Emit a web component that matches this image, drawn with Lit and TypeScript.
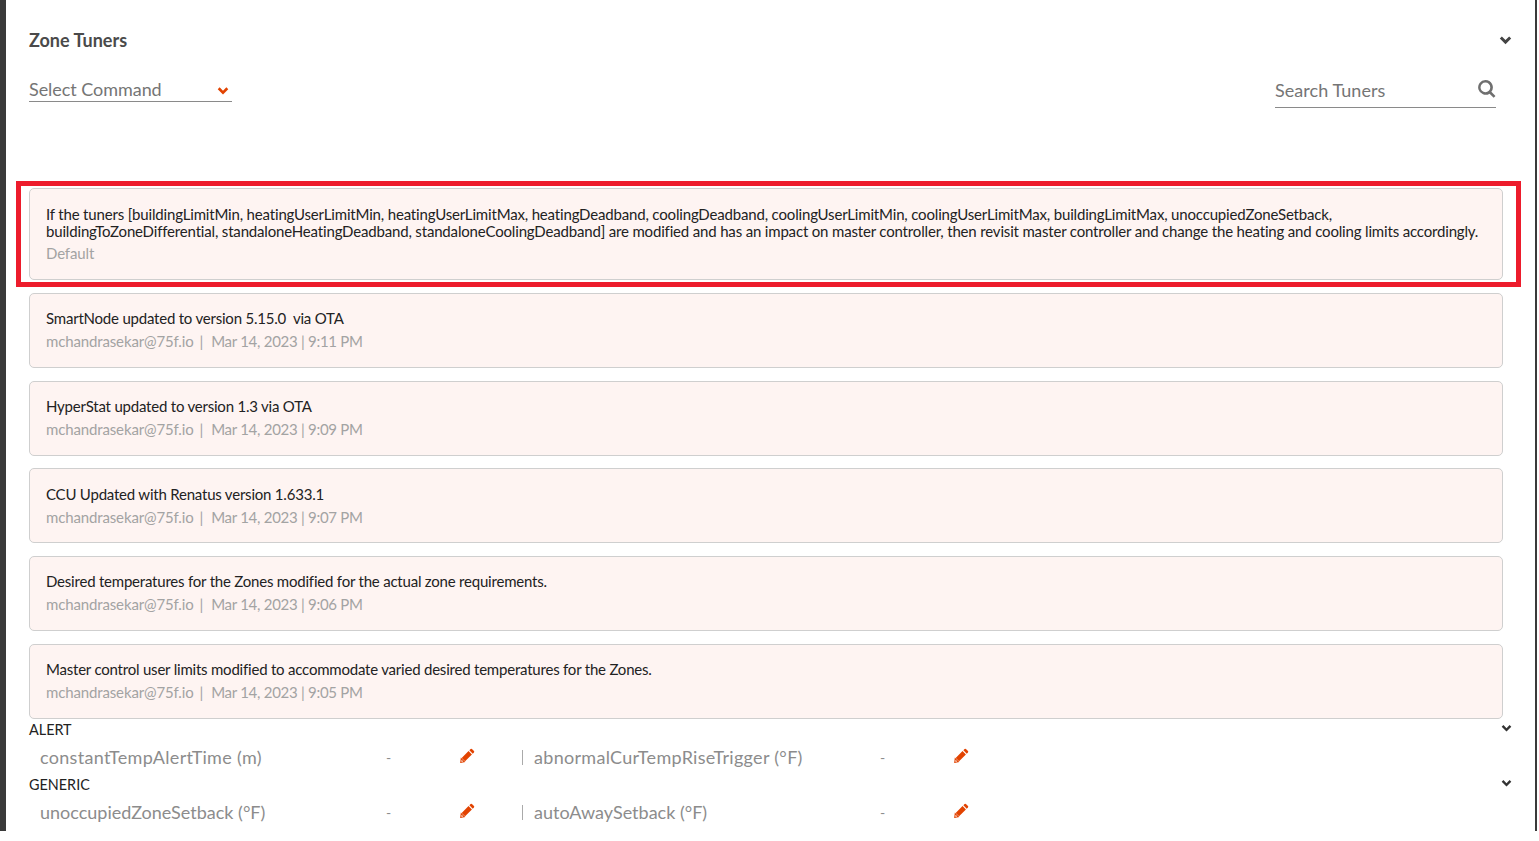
import { LitElement, html, css, svg } from "lit";
import { customElement } from "lit/decorators.js";

const chevron = svg`<path d="M1 5.5 3.5 3 8 7.5 12.5 3 15 5.5 8 12.5Z" fill="currentColor"/>`;
const pencil = svg`<path fill="currentColor" d="M11.3 1.1a1 1 0 0 1 1.4 0l2.2 2.2a1 1 0 0 1 0 1.4l-1.3 1.3L10 2.4ZM9.1 3.3l3.6 3.6-7.3 7.3-3.6-3.6Z"/><path fill="#fff" stroke="currentColor" stroke-width="1.1" d="M1.3 11.4 4.6 14.7.8 15.4Z"/>`;
const search = svg`<path fill="currentColor" fill-rule="evenodd" d="M7 0a7 7 0 0 1 5.6 11.2l3.9 3.9-1.7 1.7-3.9-3.9A7 7 0 1 1 7 0Zm0 2.4a4.6 4.6 0 1 0 0 9.2 4.6 4.6 0 0 0 0-9.2Z"/>`;

const notes = [
  ["SmartNode updated to version 5.15.0 \u00a0via OTA", "9:11 PM"],
  ["HyperStat updated to version 1.3 via OTA", "9:09 PM"],
  ["CCU Updated with Renatus version 1.633.1", "9:07 PM"],
  ["Desired temperatures for the Zones modified for the actual zone requirements.", "9:06 PM"],
  ["Master control user limits modified to accommodate varied desired temperatures for the Zones.", "9:05 PM"],
];

const groups = [
  ["ALERT", "constantTempAlertTime (m)", "abnormalCurTempRiseTrigger (°F)", "group spaced"],
  ["GENERIC", "unoccupiedZoneSetback (°F)", "autoAwaySetback (°F)", "group"],
];

@customElement("app-root")
export class AppRoot extends LitElement {
  static styles = css`
    :host { display: block; height: 841px; background: #fff; font-family: Lato, "Open Sans", sans-serif; overflow: hidden; }
    .frame { position: relative; box-sizing: border-box; width: 1537px; height: 831px; border-left: 6px solid #3a3a3a; border-right: 2px solid #3a3a3a; padding: 0 32px 0 23px; overflow: hidden; }
    .title-row { display: flex; justify-content: space-between; align-items: center; height: 24px; padding-top: 28px; }
    h2 { margin: 0; font-size: 18px; line-height: 24px; font-weight: 700; color: #4a4a4a; }
    .chev { width: 13px; height: 13px; display: block; color: #444; }
    .title-row .chev { margin-right: -9px; }
    .controls { display: flex; justify-content: space-between; align-items: flex-start; margin-top: 24px; height: 112px; }
    .select { box-sizing: border-box; width: 203px; height: 26px; display: flex; justify-content: space-between; align-items: center; border-bottom: 1px solid #8a8a8a; font-size: 18px; color: #757575; padding-right: 2px; letter-spacing: -0.05px; }
    .select .chev { color: #e24301; width: 12px; height: 12px; margin-top: 5px; margin-right: 1px; }
    .search { box-sizing: border-box; width: 221px; height: 32px; padding-bottom: 4px; display: flex; justify-content: space-between; align-items: center; border-bottom: 1px solid #8a8a8a; font-size: 18px; color: #757575; margin-right: 7px; letter-spacing: 0.05px; }
    .search svg { width: 18px; height: 18px; color: #6f6f6f; margin-top: -1px; }
    .cards { display: flex; flex-direction: column; }
    .card { box-sizing: border-box; height: 75px; margin-bottom: 12.7px; padding: 16.4px 16px 0; background: #fef4f2; border: 1px solid #cfcfcf; border-radius: 5px; font-size: 15px; line-height: 17px; color: #222; letter-spacing: -0.21px; }
    .card.first { height: 92px; margin-bottom: 13px; padding-top: 17px; letter-spacing: -0.17px; }
    .meta { margin-top: 5.9px; font-size: 15px; line-height: 17px; color: #a3a3a3; display: flex; letter-spacing: -0.14px; }
    .meta .sep { margin: 0 8px 0 6px; }
    .meta .date { letter-spacing: -0.28px; }
    .card.first .meta { margin-top: 5px; letter-spacing: -0.14px; }
    .group { height: 55px; }
    .cards + .group { margin-top: -11.2px; }
    .group-head { display: flex; justify-content: space-between; align-items: center; height: 19px; font-size: 14.4px; color: #222; }
    .group-head .chev { width: 11px; height: 11px; color: #333; margin-right: -9px; margin-top: -2px; }
    .tuners { display: grid; grid-template-columns: 494px 494px; height: 36px; }
    .tuner { position: relative; display: flex; align-items: center; font-size: 18px; color: #8c8c8c; letter-spacing: 0; padding-left: 11px; }
    .spaced .tuner { letter-spacing: 0.3px; }
    .tuner .name { width: 346px; white-space: nowrap; }
    .tuner .dash { width: 74px; font-size: 14px; }
    .tuner svg { width: 15px; height: 15px; color: #e24301; margin-top: -3px; }
    .tuner + .tuner::before { content: ""; width: 1px; height: 15px; background: #aaa; position: absolute; left: -1px; top: 11px; }
    .highlight { position: absolute; left: 10px; top: 181px; width: 1505px; height: 106px; box-sizing: border-box; border: 5px solid #ed1c2c; pointer-events: none; }
  `;

  private chev() {
    return html`<svg class="chev" viewBox="0 0 16 16">${chevron}</svg>`;
  }

  private tuner(name: string) {
    return html`<div class="tuner"><span class="name">${name}</span><span class="dash">-</span><svg viewBox="0 0 16 16">${pencil}</svg></div>`;
  }

  render() {
    return html`<div class="frame">
      <div class="title-row"><h2>Zone Tuners</h2>${this.chev()}</div>
      <div class="controls">
        <div class="select"><span>Select Command</span>${this.chev()}</div>
        <div class="search"><span>Search Tuners</span><svg viewBox="0 0 17 17">${search}</svg></div>
      </div>
      <div class="cards">
        <div class="card first">
          <div>If the tuners [buildingLimitMin, heatingUserLimitMin, heatingUserLimitMax, heatingDeadband, coolingDeadband, coolingUserLimitMin, coolingUserLimitMax, buildingLimitMax, unoccupiedZoneSetback, buildingToZoneDifferential, standaloneHeatingDeadband, standaloneCoolingDeadband] are modified and has an impact on master controller, then revisit master controller and change the heating and cooling limits accordingly.</div>
          <div class="meta">Default</div>
        </div>
        ${notes.map(([t, time]) => html`<div class="card">
          <div>${t}</div>
          <div class="meta"><span>mchandrasekar@75f.io</span><span class="sep">|</span><span class="date">Mar 14, 2023 | ${time}</span></div>
        </div>`)}
      </div>
      ${groups.map(([g, a, b, cls]) => html`<div class=${cls}>
        <div class="group-head"><span>${g}</span>${this.chev()}</div>
        <div class="tuners">${this.tuner(a)}${this.tuner(b)}</div>
      </div>`)}
      <div class="highlight"></div>
    </div>`;
  }
}
